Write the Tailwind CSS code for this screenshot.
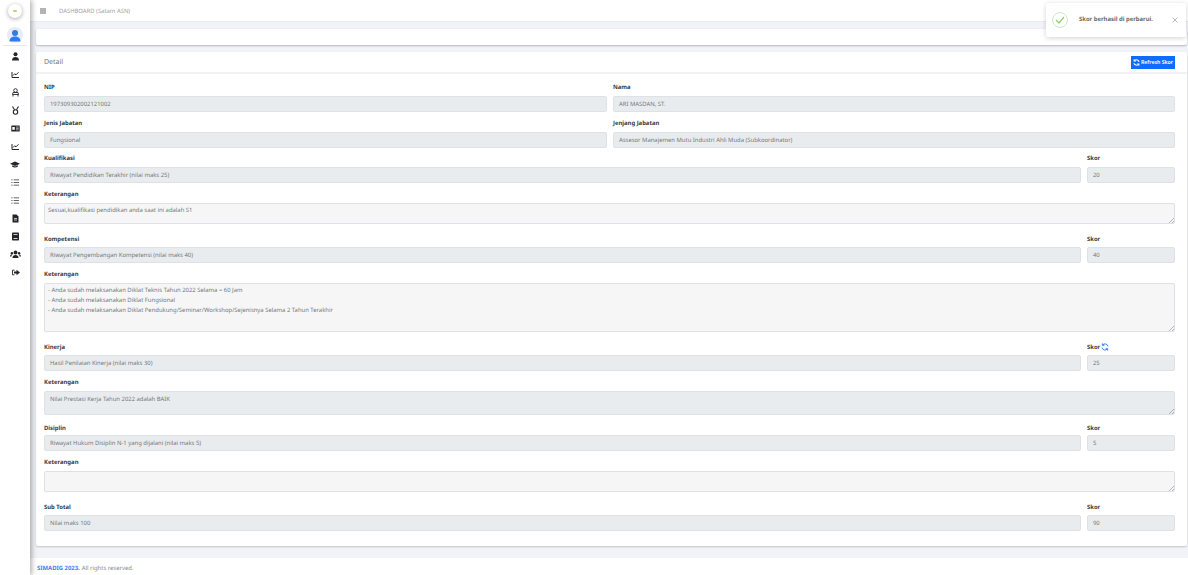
<!DOCTYPE html>
<html lang="en">
<head>
    <meta charset="UTF-8">
    <title>SIMADIG - Detail Skor</title>
    <script src="https://cdn.jsdelivr.net/npm/@tailwindcss/browser@4"></script>
</head>
<body class="bg-[#f2f3f8] font-['Noto_Sans',sans-serif] [text-rendering:geometricPrecision] text-[5.9px] text-[#75777a] h-[575px] w-[1188px] overflow-hidden">
<div class="flex h-[575px] relative">

    <!-- Sidebar -->
    <aside class="w-[30px] h-full bg-white shadow-[2px_0_5px_rgba(0,0,0,0.3)] z-10 flex flex-col items-center shrink-0">
        <div class="h-[22px] w-full flex items-center justify-center">
            <div class="w-[14px] h-[14px] rounded-full bg-white shadow-[0_1px_4px_rgba(0,0,0,0.35)] flex items-center justify-center">
                <div class="w-[4px] h-[2px] bg-[#b5d96a] rounded-full"></div>
            </div>
        </div>
        <div class="mt-[5px] w-[16px] h-[16px] rounded-full bg-[#e8ecf4] flex items-center justify-center">
            <svg width="12" height="13" viewBox="0 0 12 13"><circle cx="6" cy="4" r="3" fill="#2f7be8"/><path d="M0.500 12.500c0-3.600 2.400-5 5.500-5s5.500 1.400 5.500 5z" fill="#2f7be8"/></svg>
        </div>
        <div class="mt-[2px] w-[24px] h-px bg-[#e6e7ea]"></div>
        <div class="mt-[6px] flex flex-col items-center gap-[9px] text-[#22262b]">
            <svg width="9" height="9" viewBox="0 0 9 9"><circle cx="4.500" cy="2.300" r="2" fill="currentColor"/><path d="M1 8.500c0-2.600 1.400-3.600 3.500-3.600s3.500 1 3.500 3.600z" fill="currentColor"/></svg>
            <svg width="9" height="9" viewBox="0 0 9 9" fill="none" stroke="currentColor" stroke-width="1"><path d="M1 2v5.500h7"/><path d="M2 5.500l1.700-1.700 1.300 1 2.500-2.500"/></svg>
            <svg width="9" height="9" viewBox="0 0 9 9" fill="none" stroke="currentColor" stroke-width="0.900"><circle cx="4.500" cy="2.500" r="1.800"/><path d="M2 4.500h5l0.500 2h-6zM2 6.500v2M7 6.500v2"/></svg>
            <svg width="9" height="9" viewBox="0 0 9 9" fill="none" stroke="currentColor" stroke-width="1.100"><circle cx="4.500" cy="6" r="2.200"/><path d="M1.500 0.500l2 3.200M7.500 0.500l-2 3.200"/></svg>
            <svg width="9" height="9" viewBox="0 0 9 9"><rect x="0.300" y="1.500" width="8.400" height="6" rx="0.500" fill="currentColor"/><rect x="1.300" y="3" width="2.500" height="2.800" fill="#fff"/><path d="M5 3h2.700M5 4.400h2.700M5 5.800h2.700" stroke="#fff" stroke-width="0.600"/></svg>
            <svg width="9" height="9" viewBox="0 0 9 9" fill="none" stroke="currentColor" stroke-width="1"><path d="M1 2v5.500h7"/><path d="M2 5.500l1.700-1.700 1.300 1 2.500-2.500"/></svg>
            <svg width="10" height="9" viewBox="0 0 10 9"><path d="M5 1.500l5 2.200-5 2.200-5-2.200z" fill="currentColor"/><path d="M2.200 5.300v1.500c1.600 1 4 1 5.600 0V5.300L5 6.500z" fill="currentColor"/></svg>
            <svg width="8" height="9" viewBox="0 0 9 9" fill="none" stroke="currentColor" stroke-width="0.800"><path d="M3 1.500h6M3 4.500h6M3 7.500h6M0.300 1.500h1.400M0.300 4.500h1.400M0.300 7.500h1.400"/></svg>
            <svg width="8" height="9" viewBox="0 0 9 9" fill="none" stroke="currentColor" stroke-width="0.800"><path d="M3 1.500h6M3 4.500h6M3 7.500h6M0.300 1.500h1.400M0.300 4.500h1.400M0.300 7.500h1.400"/></svg>
            <svg width="9" height="9" viewBox="0 0 9 9"><path d="M1.500 0.500h4l2 2v6h-6z" fill="currentColor"/><path d="M3 4.500h3M3 6h3" stroke="#fff" stroke-width="0.700"/></svg>
            <svg width="9" height="9" viewBox="0 0 9 9"><rect x="1" y="0.500" width="7" height="8" rx="0.800" fill="currentColor"/><path d="M2.500 2.500h4M2.500 6.500h4" stroke="#fff" stroke-width="0.800"/></svg>
            <svg width="11" height="9" viewBox="0 0 11 9" fill="currentColor"><circle cx="5.500" cy="2.500" r="1.900"/><circle cx="1.900" cy="3.200" r="1.200"/><circle cx="9.100" cy="3.200" r="1.200"/><path d="M2.500 8c0-2.200 1.200-3 3-3s3 .8 3 3zM0 6.500c0-1.300.7-2 1.900-2l.5.100c-.6.500-.9 1.100-1 1.900zM11 6.500c0-1.300-.7-2-1.900-2l-.5.100c.6.500.9 1.100 1 1.900z"/></svg>
            <svg width="9" height="9" viewBox="0 0 9 9"><path d="M3.500 2.200H1.500v4.600h2" fill="none" stroke="currentColor" stroke-width="0.900"/><path d="M3 3.600h2.500V1.800L9 4.500 5.500 7.200V5.400H3z" fill="currentColor"/></svg>
        </div>
    </aside>

    <div class="flex-1 flex flex-col min-w-0">
        <!-- Header -->
        <header class="h-[22px] bg-white border-b border-[#eaebef] flex items-center shrink-0 pl-[10px]">
            <svg width="6" height="6" viewBox="0 0 6 6" stroke="#55585c" stroke-width="0.900"><path d="M0 1h6M0 3h6M0 5h6"/></svg>
            <span class="ml-[13px] mt-[2px] text-[#a0a2a6]">DASHBOARD (Satam ASN)</span>
        </header>

        <main class="flex-1 pl-[6px] pr-[1px] pt-[7px]">
            <div class="h-[16px] bg-white rounded-[2px] shadow-[0_1px_2px_rgba(0,0,0,0.25)]"></div>

            <!-- Detail card -->
            <section class="mt-[7px] h-[494px] bg-white rounded-[2px] shadow-[0_1px_2px_rgba(0,0,0,0.2)]">
                <div class="h-[22px] border-b-2 border-[#f1f2f5] flex items-center justify-between pl-[8px] pr-[12px]">
                    <span class="text-[7px] mt-[2px] text-[#74767a]">Detail</span>
                    <button class="w-[44px] h-[13px] bg-[#0d6efd] text-white text-[5.2px] font-semibold flex items-center justify-center gap-[1px] mt-[1px]">
                        <svg width="7" height="7" viewBox="0 0 12 12" fill="none" stroke="#fff" stroke-width="1.800"><path d="M10.500 5A4.600 4.600 0 0 0 2.500 3M1.500 7a4.600 4.600 0 0 0 8 2"/><path d="M2 .5v3h3M10 11.500v-3H7" /></svg>
                        Refresh Skor
                    </button>
                </div>

                <div class="pl-[8px] pr-[12px] pt-[8px]">
                    <div class="grid grid-cols-[563px_562px] gap-x-[6px]">
                        <div>
                            <label class="block h-[14px] font-bold text-[#2f3b45] leading-[11px]">NIP</label>
                            <div class="h-[16px] bg-[#e9ecef] border border-[#dee2e6] rounded-[2px] px-[5px] flex items-center">197309302002121002</div>
                        </div>
                        <div>
                            <label class="block h-[14px] font-bold text-[#3a3b3d] leading-[11px]">Nama</label>
                            <div class="h-[16px] bg-[#e9ecef] border border-[#dee2e6] rounded-[2px] px-[5px] flex items-center">ARI MASDAN, ST.</div>
                        </div>
                        <div class="mt-[6px]">
                            <label class="block h-[14px] font-bold text-[#2f3b45] leading-[11px]">Jenis Jabatan</label>
                            <div class="h-[16px] bg-[#e9ecef] border border-[#dee2e6] rounded-[2px] px-[5px] flex items-center">Fungsional</div>
                        </div>
                        <div class="mt-[6px]">
                            <label class="block h-[14px] font-bold text-[#3a3b3d] leading-[11px]">Jenjang Jabatan</label>
                            <div class="h-[16px] bg-[#e9ecef] border border-[#dee2e6] rounded-[2px] px-[5px] flex items-center">Assesor Manajemen Mutu Industri Ahli Muda (Subkoordinator)</div>
                        </div>
                    </div>

                    <!-- Kualifikasi -->
                    <div class="mt-[5px] grid grid-cols-[1037px_88px] gap-x-[6px]">
                        <div>
                            <label class="block h-[14px] font-bold text-[#3a3b3d] leading-[11px]">Kualifikasi</label>
                            <div class="h-[16px] bg-[#e9ecef] border border-[#dee2e6] rounded-[2px] px-[5px] flex items-center">Riwayat Pendidikan Terakhir (nilai maks 25)</div>
                        </div>
                        <div>
                            <label class="block h-[14px] font-bold text-[#3a3b3d] leading-[11px]">Skor</label>
                            <div class="h-[16px] bg-[#e9ecef] border border-[#dee2e6] rounded-[2px] px-[5px] flex items-center">20</div>
                        </div>
                    </div>
                    <label class="block mt-[6px] h-[14px] font-bold text-[#3a3b3d] leading-[11px]">Keterangan</label>
                    <div class="relative h-[21px] bg-[#f6f6f6] border border-[#dee2e6] rounded-[2px] px-[3px] pt-[1px] leading-[10px]">Sesuai,kualifikasi pendidikan anda saat ini adalah S1<svg class="absolute right-0 bottom-0" width="6" height="6" viewBox="0 0 6 6" stroke="#777" stroke-width="0.500"><path d="M1 6l5-5M4 6l2-2"/></svg></div>

                    <!-- Kompetensi -->
                    <div class="mt-[10px] grid grid-cols-[1037px_88px] gap-x-[6px]">
                        <div>
                            <label class="block h-[13px] font-bold text-[#3a3b3d] leading-[11px]">Kompetensi</label>
                            <div class="h-[16px] bg-[#e9ecef] border border-[#dee2e6] rounded-[2px] px-[5px] flex items-center">Riwayat Pengembangan Kompetensi (nilai maks 40)</div>
                        </div>
                        <div>
                            <label class="block h-[13px] font-bold text-[#3a3b3d] leading-[11px]">Skor</label>
                            <div class="h-[16px] bg-[#e9ecef] border border-[#dee2e6] rounded-[2px] px-[5px] flex items-center">40</div>
                        </div>
                    </div>
                    <label class="block mt-[6px] h-[14px] font-bold text-[#3a3b3d] leading-[11px]">Keterangan</label>
                    <div class="relative h-[49px] bg-[#f6f6f6] border border-[#dee2e6] rounded-[2px] px-[3px] pt-[1px] leading-[10px]">- Anda sudah melaksanakan Diklat Teknis Tahun 2022 Selama = 60 Jam<br>- Anda sudah melaksanakan Diklat Fungsional<br>- Anda sudah melaksanakan Diklat Pendukung/Seminar/Workshop/Sejenisnya Selama 2 Tahun Terakhir<svg class="absolute right-0 bottom-0" width="6" height="6" viewBox="0 0 6 6" stroke="#777" stroke-width="0.500"><path d="M1 6l5-5M4 6l2-2"/></svg></div>

                    <!-- Kinerja -->
                    <div class="mt-[10px] grid grid-cols-[1037px_88px] gap-x-[6px]">
                        <div>
                            <label class="block h-[13px] font-bold text-[#3a3b3d] leading-[11px]">Kinerja</label>
                            <div class="h-[16px] bg-[#e9ecef] border border-[#dee2e6] rounded-[2px] px-[5px] flex items-center">Hasil Penilaian Kinerja (nilai maks 30)</div>
                        </div>
                        <div>
                            <label class="flex h-[13px] font-bold text-[#3a3b3d] leading-[11px] gap-[1px]">Skor
                                <svg class="mt-[1px]" width="8" height="8" viewBox="0 0 12 12" fill="none" stroke="#3b82f6" stroke-width="1.500"><path d="M10.500 5A4.600 4.600 0 0 0 2.500 3M1.500 7a4.600 4.600 0 0 0 8 2"/><path d="M2 .5v3h3M10 11.500v-3H7"/></svg>
                            </label>
                            <div class="h-[16px] bg-[#e9ecef] border border-[#dee2e6] rounded-[2px] px-[5px] flex items-center">25</div>
                        </div>
                    </div>
                    <label class="block mt-[6px] h-[14px] font-bold text-[#3a3b3d] leading-[11px]">Keterangan</label>
                    <div class="relative h-[24px] bg-[#e9ecef] border border-[#dee2e6] rounded-[2px] px-[5px] pt-[2px] leading-[10px]">Nilai Prestasi Kerja Tahun 2022 adalah BAIK<svg class="absolute right-0 bottom-0" width="6" height="6" viewBox="0 0 6 6" stroke="#777" stroke-width="0.500"><path d="M1 6l5-5M4 6l2-2"/></svg></div>

                    <!-- Disiplin -->
                    <div class="mt-[8px] grid grid-cols-[1037px_88px] gap-x-[6px]">
                        <div>
                            <label class="block h-[12px] font-bold text-[#3a3b3d] leading-[10px]">Disiplin</label>
                            <div class="h-[16px] bg-[#e9ecef] border border-[#dee2e6] rounded-[2px] px-[5px] flex items-center">Riwayat Hukum Disiplin N-1 yang dijalani (nilai maks 5)</div>
                        </div>
                        <div>
                            <label class="block h-[12px] font-bold text-[#3a3b3d] leading-[10px]">Skor</label>
                            <div class="h-[16px] bg-[#e9ecef] border border-[#dee2e6] rounded-[2px] px-[5px] flex items-center">5</div>
                        </div>
                    </div>
                    <label class="block mt-[6px] h-[14px] font-bold text-[#3a3b3d] leading-[11px]">Keterangan</label>
                    <div class="relative h-[21px] bg-[#f6f6f6] border border-[#dee2e6] rounded-[2px]"><svg class="absolute right-0 bottom-0" width="6" height="6" viewBox="0 0 6 6" stroke="#777" stroke-width="0.500"><path d="M1 6l5-5M4 6l2-2"/></svg></div>

                    <!-- Sub Total -->
                    <div class="mt-[10px] grid grid-cols-[1037px_88px] gap-x-[6px]">
                        <div>
                            <label class="block h-[13px] font-bold text-[#3a3b3d] leading-[11px]">Sub Total</label>
                            <div class="h-[16px] bg-[#e9ecef] border border-[#dee2e6] rounded-[2px] px-[5px] flex items-center">Nilai maks 100</div>
                        </div>
                        <div>
                            <label class="block h-[13px] font-bold text-[#3a3b3d] leading-[11px]">Skor</label>
                            <div class="h-[16px] bg-[#e9ecef] border border-[#dee2e6] rounded-[2px] px-[5px] flex items-center">90</div>
                        </div>
                    </div>
                </div>
            </section>
        </main>

        <footer class="h-[17px] bg-white flex items-center pl-[7px] pt-[3px] shrink-0">
            <span class="font-bold text-[#3b82f6]">SIMADIG 2023.</span><span class="ml-[2px] text-[#85878c]">All rights reserved.</span>
        </footer>
    </div>

    <!-- Toast -->
    <div class="absolute left-[1046px] top-[3px] w-[140px] h-[34px] bg-white rounded-[2px] shadow-[0_1px_5px_rgba(0,0,0,0.18)] flex items-center z-20">
        <div class="ml-[6px] w-[16px] h-[16px] rounded-full border border-[#cfe8bd] flex items-center justify-center">
            <svg width="10" height="8" viewBox="0 0 10 8" fill="none" stroke="#8fd16a" stroke-width="1.300"><path d="M1 4l3 3 5-6"/></svg>
        </div>
        <span class="ml-[11px] font-bold text-[#6a6b6d] -mt-[1px]">Skor berhasil di perbarui.</span>
        <svg class="ml-auto mr-[8px]" width="6" height="6" viewBox="0 0 6 6" stroke="#b0b2b5" stroke-width="0.900"><path d="M0.500 0.500l5 5M5.500 0.500l-5 5"/></svg>
    </div>
</div>
</body>
</html>
